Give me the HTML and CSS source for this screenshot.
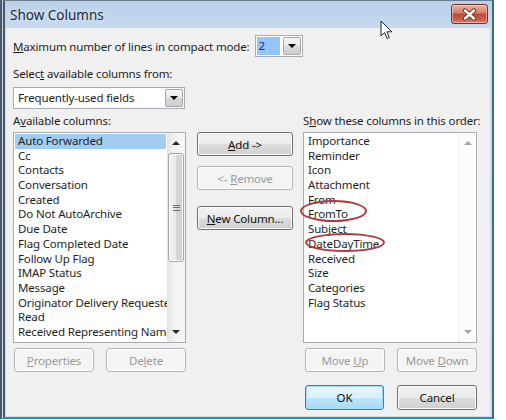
FILE: index.html
```html
<!DOCTYPE html>
<html>
<head>
<meta charset="utf-8">
<title>Show Columns</title>
<link rel="stylesheet" href="styles.css">
</head>
<body>
<div class="window">
  <div class="titlebar">
    <span class="title">Show Columns</span>
    <div class="close">
      <svg width="17" height="13" viewBox="0 0 17 13">
        <path d="M4 2.5 L13 10.5 M13 2.5 L4 10.5" stroke="#5a2a22" stroke-width="4.2" stroke-linecap="round" fill="none"/>
        <path d="M4 2.5 L13 10.5 M13 2.5 L4 10.5" stroke="#ffffff" stroke-width="2.4" stroke-linecap="round" fill="none"/>
      </svg>
    </div>
  </div>
  <div class="client">
    <div class="compact-row">
      <span class="lbl"><u>M</u>aximum number of lines in compact mode:</span>
      <div class="combo combo-small">
        <span class="combo-val selected">2</span>
        <span class="drop"><span class="tri"></span></span>
      </div>
    </div>
    <div class="lbl select-lbl">Selec<u>t</u> available columns from:</div>
    <div class="combo combo-wide">
      <span class="combo-val">Frequently-used fields</span>
      <span class="drop"><span class="tri"></span></span>
    </div>
    <div class="columns">
      <div class="col col-left">
        <div class="lbl col-lbl">A<u>v</u>ailable columns:</div>
        <div class="list">
          <div class="items">
            <div class="item hl">Auto Forwarded</div>
            <div class="item">Cc</div>
            <div class="item">Contacts</div>
            <div class="item">Conversation</div>
            <div class="item">Created</div>
            <div class="item">Do Not AutoArchive</div>
            <div class="item">Due Date</div>
            <div class="item">Flag Completed Date</div>
            <div class="item">Follow Up Flag</div>
            <div class="item">IMAP Status</div>
            <div class="item">Message</div>
            <div class="item">Originator Delivery Requested</div>
            <div class="item">Read</div>
            <div class="item">Received Representing Name</div>
          </div>
          <div class="sbar">
            <div class="arrow"><span class="tri-up"></span></div>
            <div class="track">
              <div class="thumb"><span class="grip"></span></div>
            </div>
            <div class="arrow"><span class="tri-down"></span></div>
          </div>
        </div>
        <div class="btn-row">
          <div class="btn disabled"><span><u>P</u>roperties</span></div>
          <div class="btn disabled"><span>De<u>l</u>ete</span></div>
        </div>
      </div>
      <div class="col col-mid">
        <div class="btn wide"><span><u>A</u>dd -&gt;</span></div>
        <div class="btn wide disabled remove"><span>&lt;- <u>R</u>emove</span></div>
        <div class="btn wide newcol"><span><u>N</u>ew Column...</span></div>
      </div>
      <div class="col col-right">
        <div class="lbl col-lbl">S<u>h</u>ow these columns in this order:</div>
        <div class="list list-right">
          <div class="items">
            <div class="item">Importance</div>
            <div class="item">Reminder</div>
            <div class="item">Icon</div>
            <div class="item">Attachment</div>
            <div class="item">From</div>
            <div class="item">FromTo</div>
            <div class="item">Subject</div>
            <div class="item">DateDayTime</div>
            <div class="item">Received</div>
            <div class="item">Size</div>
            <div class="item">Categories</div>
            <div class="item">Flag Status</div>
          </div>
          <div class="sbar sbar-disabled">
            <div class="arrow"><span class="tri-up"></span></div>
            <div class="track"></div>
            <div class="arrow"><span class="tri-down"></span></div>
          </div>
          <span class="ring ring-fromto"></span>
          <span class="ring ring-date"></span>
        </div>
        <div class="btn-row btn-row-right">
          <div class="btn disabled"><span>Move <u>U</u>p</span></div>
          <div class="btn disabled"><span>Move <u>D</u>own</span></div>
        </div>
        <div class="btn-row btn-row-right ok-row">
          <div class="btn default"><span>OK</span></div>
          <div class="btn"><span>Cancel</span></div>
        </div>
      </div>
    </div>
  </div>
  <svg class="cursor" width="13" height="20" viewBox="0 0 13 20">
    <path d="M1 1 L1 16 L4.5 12.5 L7 18.5 L9.3 17.5 L6.9 11.8 L11.8 11.8 Z" fill="#ffffff" stroke="#222" stroke-width="1" stroke-linejoin="round"/>
  </svg>
</div>
</body>
</html>
```

FILE: styles.css
```css
html, body {
  margin: 0;
  padding: 0;
  background: #ffffff;
}

body {
  font-family: "Noto Sans", "Open Sans", sans-serif;
  font-size: 11.5px;
  letter-spacing: -0.15px;
  color: #1e1e1e;
}

.window {
  position: relative;
  width: 494px;
  height: 419px;
  box-sizing: border-box;
  border-left: 5px double #4e5862;
  border-top: 1px solid #6c7d8e;
  border-right: 2px solid #3f6a84;
  border-bottom: 2px solid #2b8db5;
  padding: 0 2px 1px 0;
  background: linear-gradient(#b9d0e9, #c6daef 28px, #c9dcf0);
  display: flex;
  flex-direction: column;
}

.titlebar {
  height: 27px;
  display: flex;
  align-items: center;
  padding-left: 5px;
}

.title {
  font-size: 13.5px;
  letter-spacing: 0;
  color: #1e2a36;
  flex: 1;
  text-shadow: 0 0 6px rgba(255, 255, 255, 0.8);
}

.close {
  align-self: flex-start;
  margin-top: 3px;
  margin-right: 2px;
  width: 37px;
  height: 20px;
  box-sizing: border-box;
  border: 1px solid #7b3023;
  border-radius: 3px;
  background: linear-gradient(#eab3a4, #d7806a 42%, #c24a32 52%, #cb5e46 80%, #d98a74);
  box-shadow: inset 0 0 0 1px rgba(255, 220, 210, 0.5);
  display: flex;
  align-items: center;
  justify-content: center;
}

.client {
  flex: 1;
  background: #f0f0f0;
  border-left: 1px solid #d5dbe2;
  padding: 7px 0 0 7px;
  box-sizing: border-box;
}

.lbl {
  line-height: 15px;
  white-space: nowrap;
}

.compact-row {
  display: flex;
  align-items: center;
  height: 22px;
}

.combo {
  box-sizing: border-box;
  height: 22px;
  border: 1px solid #a9acb2;
  background: #ffffff;
  display: flex;
  align-items: center;
  padding: 1px;
}

.combo-small {
  width: 48px;
  margin-left: 5px;
}

.combo-wide {
  width: 172px;
  margin-top: 6px;
}

.combo-val {
  flex: 1;
  padding-left: 3px;
  line-height: 16px;
  white-space: nowrap;
}

.combo-val.selected {
  background: #94c5f6;
  color: #16307a;
  margin-right: 3px;
  align-self: stretch;
  line-height: 18px;
  padding-left: 2px;
}

.drop {
  width: 18px;
  height: 18px;
  box-sizing: border-box;
  border: 1px solid #a7a7a7;
  border-radius: 2px;
  background: linear-gradient(#f6f6f6, #e9e9e9 50%, #d9d9d9 51%, #cfcfcf);
  display: flex;
  align-items: center;
  justify-content: center;
}

.tri {
  width: 0;
  height: 0;
  border-left: 4px solid transparent;
  border-right: 4px solid transparent;
  border-top: 4px solid #000;
}

.select-lbl {
  margin-top: 9px;
}

.columns {
  display: flex;
  margin-top: 4px;
}

.col {
  display: flex;
  flex-direction: column;
}

.col-left {
  width: 173px;
}

.col-mid {
  width: 96px;
  margin-left: 11px;
  padding-top: 19px;
}

.col-right {
  width: 174px;
  margin-left: 10px;
}

.col-lbl {
  height: 15px;
}

.list {
  position: relative;
  margin-top: 4px;
  height: 211px;
  box-sizing: border-box;
  border: 1px solid #a9acb2;
  background: #ffffff;
  display: flex;
}

.items {
  flex: 1;
  overflow: hidden;
  padding: 1px 1px 0 1px;
}

.item {
  line-height: 14.7px;
  height: 14.7px;
  padding-left: 3px;
  white-space: nowrap;
  color: #1e1e1e;
}

.item.hl {
  background: #a2cdf3;
}

.sbar {
  width: 18px;
  display: flex;
  flex-direction: column;
  background: linear-gradient(90deg, #e3e3e3, #f2f2f2 40%, #f6f6f6);
}

.arrow {
  height: 20px;
  display: flex;
  align-items: center;
  justify-content: center;
}

.tri-up {
  width: 0;
  height: 0;
  border-left: 4px solid transparent;
  border-right: 4px solid transparent;
  border-bottom: 4px solid #2a2a2a;
}

.tri-down {
  width: 0;
  height: 0;
  border-left: 4px solid transparent;
  border-right: 4px solid transparent;
  border-top: 4px solid #2a2a2a;
}

.track {
  flex: 1;
  padding: 0 1px;
}

.thumb {
  height: 109px;
  box-sizing: border-box;
  border: 1px solid #a6a6a6;
  border-radius: 3px;
  background: linear-gradient(90deg, #f4f4f4, #e8e8e8 50%, #d6d6d6 51%, #d0d0d0);
  box-shadow: inset 0 0 0 1px #fafafa;
  display: flex;
  align-items: center;
  justify-content: center;
}

.grip {
  width: 7px;
  height: 6px;
  box-sizing: border-box;
  border-top: 1px solid #6b6b6b;
  border-bottom: 1px solid #6b6b6b;
  background: linear-gradient(transparent 1px, #6b6b6b 1px 2px, transparent 2px);
}

.sbar-disabled {
  background: #fbfbfb;
  border-left: 1px solid #ececec;
  width: 17px;
}

.sbar-disabled .tri-up {
  border-bottom-color: #a6a6a6;
}

.sbar-disabled .tri-down {
  border-top-color: #a6a6a6;
}

.btn-row {
  display: flex;
  justify-content: space-between;
  margin-top: 5px;
  padding-left: 1px;
}

.btn-row-right {
  padding-left: 2px;
}

.ok-row {
  margin-top: 13px;
}

.btn {
  box-sizing: border-box;
  width: 80px;
  height: 24px;
  border: 1px solid #707070;
  border-radius: 3px;
  background: linear-gradient(#f2f2f2, #ebebeb 50%, #dddddd 51%, #cfcfcf);
  box-shadow: inset 0 0 0 1px #fbfbfb;
  display: flex;
  align-items: center;
  justify-content: center;
  white-space: nowrap;
  color: #111;
}

.btn.wide {
  width: 96px;
}

.btn.remove {
  margin-top: 10px;
}

.btn.newcol {
  margin-top: 16px;
}

.btn.disabled {
  border-color: #b2b6b9;
  background: #f4f4f4;
  box-shadow: inset 0 0 0 1px #fcfcfc;
  color: #9a9a9a;
}

.ok-row .btn {
  height: 25px;
}

.btn.default {
  border-color: #3c7fb1;
  background: linear-gradient(#eaf6fd, #d9f0fc 50%, #bee6fd 51%, #a7d9f5);
  box-shadow: inset 0 0 0 1px #9fdcf7;
  width: 79px;
}

.ring {
  position: absolute;
  box-sizing: border-box;
  border: 2.5px solid #b1393b;
  border-radius: 50%;
}

.ring-fromto {
  left: -4px;
  top: 67px;
  width: 67px;
  height: 22px;
}

.ring-date {
  left: 1px;
  top: 100px;
  width: 80px;
  height: 19px;
}

.cursor {
  position: absolute;
  left: 375px;
  top: 19px;
}
```
